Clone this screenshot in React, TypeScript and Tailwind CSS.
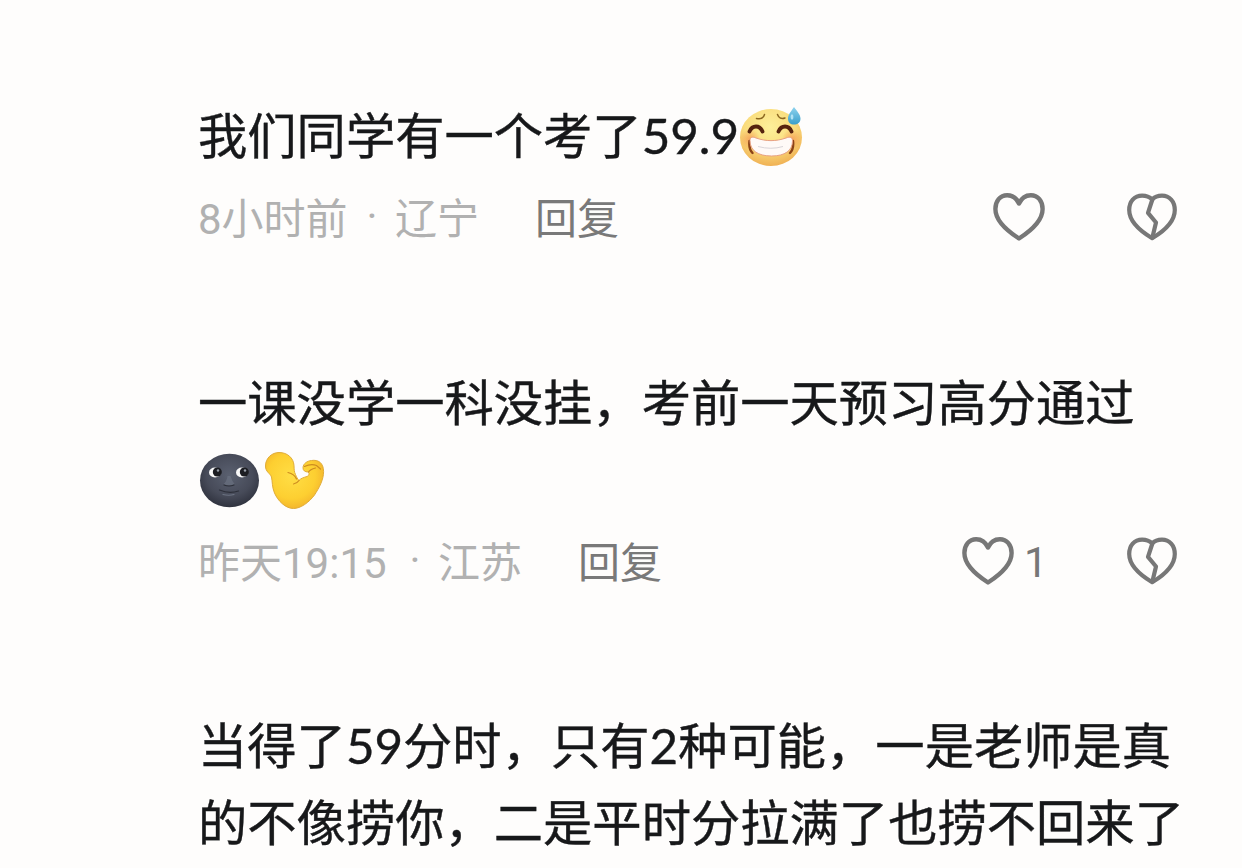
import type { ReactNode } from "react";

function Heart() {
  return (
    <svg width="54" height="52" viewBox="0 0 54 52" fill="none" stroke="#777" strokeWidth="4.4" strokeLinejoin="round">
      <path d="M27 12.5C24.5 7 20.2 4.2 15.2 4.2C8 4.2 3.4 10 3.4 18C3.4 28.5 13 38.5 27 47.5C41 38.5 50.6 28.5 50.6 18C50.6 10 46 4.2 38.8 4.2C33.8 4.2 29.5 7 27 12.5Z" />
    </svg>
  );
}

function BrokenHeart() {
  return (
    <svg width="54" height="52" viewBox="0 0 54 52" fill="none" stroke="#777" strokeWidth="4.2" strokeLinejoin="round" strokeLinecap="round">
      <path d="M27.2 8.5C24.5 5.8 21.2 4.6 17.2 4.6C9.2 4.6 4.2 10.5 4.2 19C4.2 29 13.5 39 27.2 47.2C41 39 49.8 29 49.8 19C49.8 10.5 44.5 4.6 37 4.6C33 4.6 29.5 5.9 27.2 8.5Z" />
      <path d="M27.2 9L23 21.8L31 31.5L27.5 46" />
    </svg>
  );
}

function SweatGrin() {
  return (
    <svg width="66" height="62" viewBox="0 0 66 62" className="mt-[4px] shrink-0">
      <defs>
        <radialGradient id="grin" cx="0.48" cy="0.32" r="0.68">
          <stop offset="0" stopColor="#fdf09a" />
          <stop offset="0.6" stopColor="#fadc7c" />
          <stop offset="1" stopColor="#f0b154" />
        </radialGradient>
        <linearGradient id="drop" x1="0" y1="0" x2="0" y2="1">
          <stop offset="0" stopColor="#8ed3ee" />
          <stop offset="1" stopColor="#3a9fcb" />
        </linearGradient>
        <radialGradient id="blush">
          <stop offset="0" stopColor="#f48a4a" stopOpacity="0.65" />
          <stop offset="1" stopColor="#f48a4a" stopOpacity="0" />
        </radialGradient>
      </defs>
      <ellipse cx="32" cy="31.5" rx="31" ry="28.5" fill="url(#grin)" />
      <ellipse cx="11" cy="33" rx="10" ry="10" fill="url(#blush)" />
      <ellipse cx="53" cy="33" rx="10" ry="10" fill="url(#blush)" />
      <g fill="none" strokeLinecap="round">
        <path d="M17.5 12.5Q24 14 25.5 8.5M38.5 8.5Q40.5 14 46 12" stroke="#8c6720" strokeWidth="1.5" />
        <path d="M10.5 25.5Q12.5 20.5 17 20.5Q21.5 20.5 23.5 25.5M39.5 25.5Q41.5 20.5 46 20.5Q50.5 20.5 52.5 25.5" stroke="#57240f" strokeWidth="3.8" />
      </g>
      <path d="M10.5 35Q9.5 43 13.5 47M54 35Q55 43 51 47" fill="none" stroke="#8c4317" strokeWidth="2.4" strokeLinecap="round" />
      <path d="M11 34.5C11 31 13.5 30.5 17 32C27 35.5 37 35.5 47 32C51 30.5 53.5 31 53.5 35C53.5 44.5 46 50 32.5 50C19 50 11 44.5 11 34.5Z" fill="#fffaf7" stroke="#e8a184" strokeWidth="1" />
      <path d="M19 40.5Q32 44 44 40.5" fill="none" stroke="#d9d5d8" strokeWidth="1" />
      <path d="M55 1C51.5 6 49 9 49 12.5C49 16.500 51.500 18.500 55 18.500C58.500 18.500 61.500 16.500 61.500 12.500C61.500 9 58.500 5.500 55 1Z" fill="url(#drop)" />
      <ellipse cx="53" cy="11" rx="1.4" ry="2.7" fill="#c5eefb" opacity="0.8" />
    </svg>
  );
}

function NewMoon() {
  return (
    <svg width="62" height="56" viewBox="0 0 62 56" className="shrink-0">
      <defs>
        <radialGradient id="moon" cx="0.5" cy="0.4" r="0.6">
          <stop offset="0" stopColor="#5a6070" />
          <stop offset="0.65" stopColor="#474b59" />
          <stop offset="1" stopColor="#30333f" />
        </radialGradient>
      </defs>
      <ellipse cx="31.5" cy="27.5" rx="29.500" ry="26.700" fill="url(#moon)" />
      <ellipse cx="17" cy="19.5" rx="6" ry="5" fill="#f8f8f8" />
      <ellipse cx="44" cy="19.5" rx="6" ry="5" fill="#f8f8f8" />
      <circle cx="19.3" cy="19" r="4.5" fill="#1c1d22" />
      <circle cx="46.3" cy="19" r="4.5" fill="#1c1d22" />
      <circle cx="20" cy="17.5" r="1.2" fill="#9aa0aa" />
      <circle cx="47" cy="17.5" r="1.2" fill="#9aa0aa" />
      <path d="M29.5 23Q29 28 25.5 31Q31 34 36.5 31Q34 28 32.5 23" fill="#6b7282" opacity="0.7" />
      <path d="M26 32Q31 34 36 32M21.5 37Q31 41 40.5 38" fill="none" stroke="#2c2f39" strokeWidth="1.2" strokeLinecap="round" />
      <path d="M25 41.5Q31 43 36 41.5" fill="none" stroke="#6b7282" strokeWidth="1.2" strokeLinecap="round" />
    </svg>
  );
}

function Biceps() {
  return (
    <svg width="62" height="60" viewBox="0 0 62 60" className="shrink-0">
      <defs>
        <radialGradient id="arm" cx="0.45" cy="0.42" r="0.62">
          <stop offset="0" stopColor="#ffde45" />
          <stop offset="0.65" stopColor="#fdcf31" />
          <stop offset="1" stopColor="#f2b12b" />
        </radialGradient>
      </defs>
      <path
        d="M1.5 15C1.5 7 8 1.500 15 1.500C23.500 1.500 29.500 7 30 14.500C30.200 18.500 30 20.500 31.500 23.500C32.500 26 33.500 28 35 29.500C36.500 27.500 39.500 26.500 43 25.500C45.500 24.500 45.500 21.500 44 21C41 21 38.800 19.500 39 16.500C39.400 12.500 43 10 47.500 9.500C54 8.500 59.500 11.500 59.600 20.500C59.600 29 55 37 50.500 44C45 51.500 36.500 57.500 29.500 57.500C21.500 57.500 14 50 10.500 42C8 36 8.500 31 7.500 26C6 22 1.500 21 1.500 15Z"
        fill="url(#arm)"
        stroke="#e0ac38"
        strokeWidth="1"
      />
      <path d="M24 21.500Q30.500 23 32.500 28M35 29.500Q33 32.500 29.500 33M40.500 15.500Q47 12.500 52.500 14.500L56.500 18M44.500 21Q46 18.500 51.500 17" fill="none" stroke="#cd8c20" strokeWidth="1.200" strokeLinecap="round" />
    </svg>
  );
}

type MetaProps = { time: string; place: string; timeWidth: string; likes?: number };

function Meta({ time, place, timeWidth, likes }: MetaProps) {
  return (
    <div className="flex h-[84px] items-center pr-[63px] font-[Roboto,'Noto_Sans_CJK_SC',sans-serif] text-[42px] leading-[42px] text-[#b1b1b1]">
      <span className={`${timeWidth} shrink-0 pt-[6px]`}>{time}</span>
      <span className="w-[46px] shrink-0 text-center">·</span>
      <span className="w-[140px] shrink-0 pt-[6px]">{place}</span>
      <span className="pt-[6px] text-[#797979]">回复</span>
      <div className="ml-auto flex items-center text-[#777]">
        <Heart />
        {likes && <span className="ml-[9px] w-[22px] pt-[4px]">{likes}</span>}
      </div>
      <div className="ml-[79px]">
        <BrokenHeart />
      </div>
    </div>
  );
}

function Line({ children }: { children: ReactNode }) {
  return (
    <p className="flex h-[77px] items-center whitespace-nowrap pb-[3px] text-[49.3px] leading-[74px] text-[#17181a] [-webkit-text-stroke:0.4px]">
      {children}
    </p>
  );
}

export default function App() {
  return (
    <main className="h-[868px] w-[1242px] overflow-hidden bg-[#fefdfc] pl-[198px] pt-[98px] font-[Lato,'Noto_Sans_CJK_SC',sans-serif]">
      <article className="h-[267px]">
        <Line>
          我们同学有一个考了59.9
          <SweatGrin />
        </Line>
        <Meta time="8小时前" place="辽宁" timeWidth="w-[151px]" />
      </article>

      <article className="h-[343px]">
        <Line>一课没学一科没挂，考前一天预习高分通过</Line>
        <Line>
          <span className="flex items-center gap-[4px] pt-[3px]">
            <NewMoon />
            <Biceps />
          </span>
        </Line>
        <Meta time="昨天19:15" place="江苏" timeWidth="w-[194px]" likes={1} />
      </article>

      <article>
        <Line>当得了59分时，只有2种可能，一是老师是真</Line>
        <Line>的不像捞你，二是平时分拉满了也捞不回来了</Line>
      </article>
    </main>
  );
}
